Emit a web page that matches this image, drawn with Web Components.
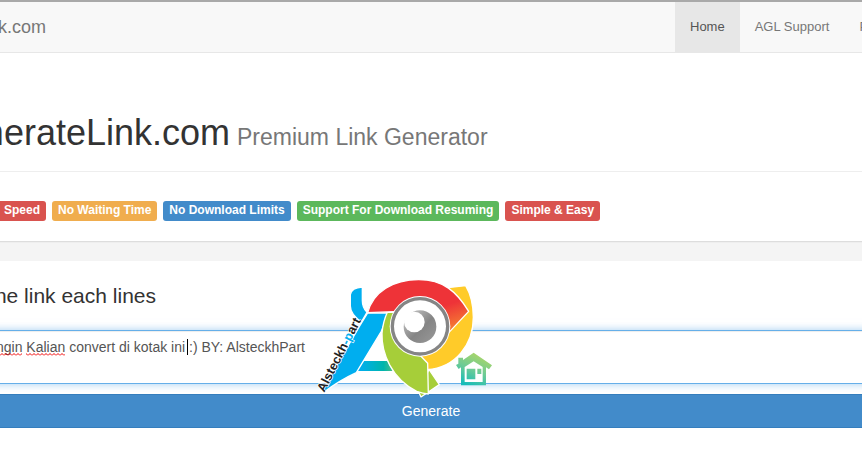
<!DOCTYPE html>
<html lang="en">
<head>
<meta charset="utf-8">
<title>Premium Link Generator</title>
<style>
  body {
    margin: 0;
    overflow-x: hidden;
    background: #fff;
    color: #333;
    font: 14px/20px "Liberation Sans", Arial, sans-serif;
  }
</style>
</head>
<body>
<agl-page></agl-page>

<script>
const define = (name, html) => {
  const template = document.createElement("template");
  template.innerHTML = html;
  customElements.define(name, class extends HTMLElement {
    constructor() {
      super();
      this.attachShadow({ mode: "open" }).appendChild(template.content.cloneNode(true));
    }
  });
};

define("agl-navbar", `
  <style>
    :host {
      display: flex;
      justify-content: space-between;
      overflow: hidden;
      background: #f8f8f8;
      border-top: 2px solid #a9a9a9;
      border-bottom: 1px solid #e7e7e7;
    }
    .brand {
      display: flex;
      justify-content: flex-end;
      width: 46px;
      font-size: 18px;
      line-height: 50px;
      color: #777;
      text-decoration: none;
    }
    nav {
      display: flex;
      width: 187px;
    }
  </style>
  <a class="brand" href="#">k.com</a>
  <nav><slot></slot></nav>
`);

define("agl-nav-link", `
  <style>
    :host { display: block; flex: none; }
    a {
      display: block;
      padding: 0 15px;
      font-size: 13px;
      line-height: 50px;
      color: #777;
      text-decoration: none;
    }
    :host([active]) a { background: #e7e7e7; color: #555; }
  </style>
  <a href="#"><slot></slot></a>
`);

define("agl-label", `
  <style>
    :host {
      display: block;
      flex: none;
      padding: 0 6px 1px;
      border-radius: 3px;
      background: var(--label-color, #d9534f);
      color: #fff;
      font-size: 12px;
      font-weight: bold;
      line-height: 19px;
    }
    :host([type="warning"]) { --label-color: #f0ad4e; }
    :host([type="primary"]) { --label-color: #428bca; }
    :host([type="success"]) { --label-color: #5cb85c; }
  </style>
  <slot></slot>
`);

define("agl-header", `
  <style>
    :host {
      display: block;
      padding: 60px 0 20px;
      border-bottom: 1px solid #ddd;
    }
    .title {
      display: flex;
      align-items: baseline;
      gap: 7px;
      padding-bottom: 18px;
      border-bottom: 1px solid #eee;
      white-space: nowrap;
    }
    h1 {
      display: flex;
      justify-content: flex-end;
      width: 230px;
      margin: 0;
      font-size: 36px;
      font-weight: normal;
      line-height: 40px;
    }
    small { font-size: 23px; color: #777; }
    .labels {
      display: flex;
      gap: 6px;
      margin: 29px 0 0 -2px;
    }
  </style>
  <div class="title">
    <h1>nerateLink.com</h1>
    <small>Premium Link Generator</small>
  </div>
  <div class="labels"><slot></slot></div>
`);

define("agl-link-box", `
  <style>
    :host { display: block; position: relative; }
    textarea {
      display: block;
      box-sizing: border-box;
      width: 100%;
      height: 54px;
      padding: 6px 12px;
      border: 1px solid #66afe9;
      outline: 0;
      resize: none;
      overflow: hidden;
      background: #fff;
      color: #555;
      font: inherit;
      box-shadow: inset 0 1px 1px rgba(0, 0, 0, .075), 0 0 8px rgba(102, 175, 233, .6);
    }
    /* spelling marks and caret lie over the text */
    svg {
      position: absolute;
      top: 0;
      left: 17px;
      pointer-events: none;
    }
  </style>
  <textarea aria-label="Links" spellcheck="false">ngin Kalian convert di kotak ini :) BY: AlsteckhPart</textarea>
  <svg width="200" height="30" aria-hidden="true">
    <defs>
      <pattern id="wave" width="4" height="3" y="23" patternUnits="userSpaceOnUse">
        <path d="M0 2.5 L2 .5 L4 2.5" fill="none" stroke="#f00000"/>
      </pattern>
    </defs>
    <path d="M0 23h22v3H0zM26 23h39v3H26z" fill="url(#wave)"/>
    <path d="M187 9h1v16h-1z" fill="#000"/>
  </svg>
`);

define("agl-form", `
  <style>
    :host { display: block; padding-top: 23px; }
    h3 {
      display: flex;
      justify-content: flex-end;
      width: 156px;
      margin: 0 0 22px;
      font-size: 21px;
      font-weight: normal;
      line-height: 24px;
      white-space: nowrap;
    }
    /* the form runs past both window edges */
    form { margin: 0 -17px; }
    button {
      display: block;
      position: relative;
      width: 100%;
      margin-top: 10px;
      padding: 6px 12px;
      border: 1px solid #357ebd;
      background: #428bca;
      color: #fff;
      font: inherit;
    }
  </style>
  <h3>ne link each lines</h3>
  <form>
    <agl-link-box></agl-link-box>
    <button type="button">Generate</button>
  </form>
`);

define("agl-watermark", `
  <style>
    :host {
      position: absolute;
      top: 270px;
      left: 310px;
      pointer-events: none;
    }
    svg { display: block; }
    text { font: bold 38px "Liberation Sans", Arial, sans-serif; }
  </style>
  <svg width="190" height="130" viewBox="0 0 570 390" role="img" aria-label="Logo">
    <defs>
      <linearGradient id="red" gradientUnits="userSpaceOnUse" x1="410" y1="105" x2="435" y2="180">
        <stop offset="0" stop-color="#ee3338"/>
        <stop offset="1" stop-color="#f58232"/>
      </linearGradient>
      <linearGradient id="bar">
        <stop offset=".1" stop-color="#00aeef"/>
        <stop offset=".75" stop-color="#00b5ad"/>
        <stop offset="1" stop-color="#4dbd85"/>
      </linearGradient>
      <linearGradient id="house" gradientUnits="userSpaceOnUse" x1="510" y1="255" x2="470" y2="345">
        <stop offset="0" stop-color="#a8d56a"/>
        <stop offset=".5" stop-color="#6ccb96"/>
        <stop offset="1" stop-color="#16bcb9"/>
      </linearGradient>
      <linearGradient id="pupil" x1="0" y1="0" x2="1" y2="1">
        <stop offset="0" stop-color="#d0d0d0"/>
        <stop offset=".55" stop-color="#858585"/>
        <stop offset="1" stop-color="#999"/>
      </linearGradient>
    </defs>
    <g stroke="#fff" stroke-width="4" stroke-linejoin="round">
      <path d="M160 273H232L248 303H138Z" fill="url(#bar)" stroke="none"/>
      <path d="M121 74Q124 53 157 51V92Q157 112 171 127L154 156Q121 132 121 108Z" fill="#00aeef"/>
      <path d="M173 129H236L214 184L139 308Q90 330 38 369L36 362L150 166Z" fill="#00aeef"/>
      <path d="M413 53L467 47Q490 86 490 142C490 225 435 294 352 299L320 250Z" fill="#ffcb29"/>
      <path d="M357 298L388 344L333 381L326 366Z" fill="#a6ce39"/>
      <path d="M232 127H260L330 256L353 280L355 372Q339 371 320 364C245 326 214 250 216 190Q219 155 232 127Z" fill="#a6ce39"/>
      <path d="M173 128C190 65 250 29 326 29C400 29 440 65 476 124L417 187L330 169L251 125Z" fill="url(#red)"/>
    </g>
    <circle cx="330" cy="169" r="91" fill="#fff"/>
    <circle cx="330" cy="169" r="83" fill="#fff" stroke="#858585" stroke-width="10"/>
    <circle cx="330" cy="170" r="49" fill="url(#pupil)"/>
    <circle cx="313" cy="156" r="31" fill="#fff"/>
    <g fill="url(#house)">
      <path d="M445 263H459V270L491 248L546 286L537 298L528 292V346H453V292L446 297L438 285L445 281Z"/>
      <path d="M464 291L491 274L518 291V336H464Z" fill="#fff"/>
      <path d="M470 296H496V328H470ZM502 296H514V312H502Z"/>
    </g>
    <text transform="translate(43 368) rotate(-63)" fill="#222" stroke="#fff" stroke-width="4" paint-order="stroke">Alsteckh<tspan fill="#00aeef">-p</tspan>art</text>
  </svg>
`);

define("agl-page", `
  <style>
    :host { display: block; position: relative; overflow-x: clip; }
    .band {
      height: 18px;
      border-top: 1px solid #eee;
      background: #f4f4f4;
    }
  </style>
  <agl-navbar>
    <agl-nav-link active>Home</agl-nav-link>
    <agl-nav-link>AGL Support</agl-nav-link>
    <agl-nav-link>P</agl-nav-link>
  </agl-navbar>
  <agl-header>
    <agl-label>Speed</agl-label>
    <agl-label type="warning">No Waiting Time</agl-label>
    <agl-label type="primary">No Download Limits</agl-label>
    <agl-label type="success">Support For Download Resuming</agl-label>
    <agl-label>Simple &amp; Easy</agl-label>
  </agl-header>
  <div class="band"></div>
  <agl-form></agl-form>
  <agl-watermark></agl-watermark>
`);
</script>
</body>
</html>
